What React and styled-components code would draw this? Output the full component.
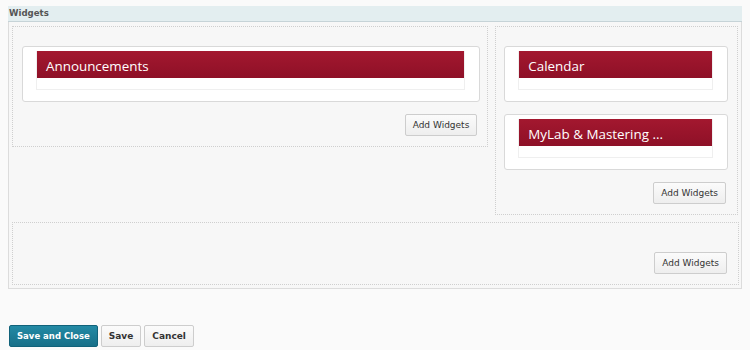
import React from 'react'
import styled, { createGlobalStyle } from 'styled-components'

const GlobalStyle = createGlobalStyle`
  body {
    margin: 0;
    background: #fafafa;
    font-family: "DejaVu Sans", Verdana, sans-serif;
  }
`

const Page = styled.div`
  padding: 6px 8px 0 8px;
  width: 734px;
`

const SectionHeader = styled.div`
  height: 16px;
  box-sizing: border-box;
  background: #e3eef0;
  border-bottom: 1px solid #c6d3d7;
  color: #555;
  font-weight: bold;
  font-size: 8.6px;
  line-height: 15px;
  padding-left: 1px;
`

const SectionBody = styled.div`
  border: 1px solid #dcdcdc;
  border-top: none;
  background: #f7f7f7;
  padding: 4px 3px 3px 3px;
  display: flex;
  flex-direction: column;
  gap: 7px;
`

const TopRow = styled.div`
  display: flex;
  gap: 7px;
  align-items: flex-start;
`

const Zone = styled.div`
  box-sizing: border-box;
  width: ${p => p.$width};
  border: 1px dotted #cfcfcf;
  padding: ${p => (p.$empty ? '17px' : '19px')} ${p => p.$right} 10px ${p => p.$left};
  display: flex;
  flex-direction: column;
`

const WidgetList = styled.div`
  display: flex;
  flex-direction: column;
  gap: 12px;
`

const Card = styled.div`
  background: #fff;
  border: 1px solid #d9d9d9;
  border-radius: 3px;
  padding: 4px 14px 11px 13px;
`

const Widget = styled.div`
  border: 1px solid #efefef;
  border-top: none;
  background: #fff;
`

const WidgetTitle = styled.div`
  height: 27px;
  overflow: hidden;
  background: linear-gradient(#a3182f, #8e1027);
  color: #fff;
  font-family: "Open Sans", sans-serif;
  font-size: 13.4px;
  line-height: 30px;
  padding-left: 9px;
  white-space: nowrap;
`

const WidgetBody = styled.div`
  height: 11px;
`

const ButtonRow = styled.div`
  display: flex;
  justify-content: flex-end;
  margin-top: 12px;
  padding-right: ${p => p.$pad};
`

const Button = styled.button`
  box-sizing: border-box;
  height: 22px;
  padding: 0 ${p => p.$pad || '7px'};
  border: 1px solid #cdcdcd;
  border-radius: 2px;
  background: linear-gradient(#fbfbfb, #eeeeee);
  color: #333;
  font-family: "DejaVu Sans", Verdana, sans-serif;
  font-size: 9px;
  font-weight: ${p => (p.$bold ? 'bold' : 'normal')};
  cursor: pointer;
`

const PrimaryButton = styled(Button)`
  background: linear-gradient(#238aa5, #176f88);
  border-color: #11627a;
  color: #fff;
  font-weight: bold;
  font-size: 8.5px;
`

const Footer = styled.div`
  display: flex;
  gap: 3px;
  margin-top: 36px;
  padding-left: 1px;
`

function WidgetCard({ title }) {
  return (
    <Card>
      <Widget>
        <WidgetTitle>{title}</WidgetTitle>
        <WidgetBody />
      </Widget>
    </Card>
  )
}

export default function App() {
  return (
    <>
      <GlobalStyle />
      <Page>
        <SectionHeader>Widgets</SectionHeader>
        <SectionBody>
          <TopRow>
            <Zone $width="477px" $left="9px" $right="7px">
              <WidgetList>
                <WidgetCard title="Announcements" />
              </WidgetList>
              <ButtonRow $pad="3px">
                <Button>Add Widgets</Button>
              </ButtonRow>
            </Zone>
            <Zone $width="243px" $left="8px" $right="9px">
              <WidgetList>
                <WidgetCard title="Calendar" />
                <WidgetCard title="MyLab &amp; Mastering ..." />
              </WidgetList>
              <ButtonRow $pad="2px">
                <Button>Add Widgets</Button>
              </ButtonRow>
            </Zone>
          </TopRow>
          <Zone $width="727px" $left="9px" $right="11px" $empty>
            <ButtonRow $pad="0px">
              <Button>Add Widgets</Button>
            </ButtonRow>
          </Zone>
        </SectionBody>
        <Footer>
          <PrimaryButton>Save and Close</PrimaryButton>
          <Button $bold $pad="7px">Save</Button>
          <Button $bold $pad="7px">Cancel</Button>
        </Footer>
      </Page>
    </>
  )
}
